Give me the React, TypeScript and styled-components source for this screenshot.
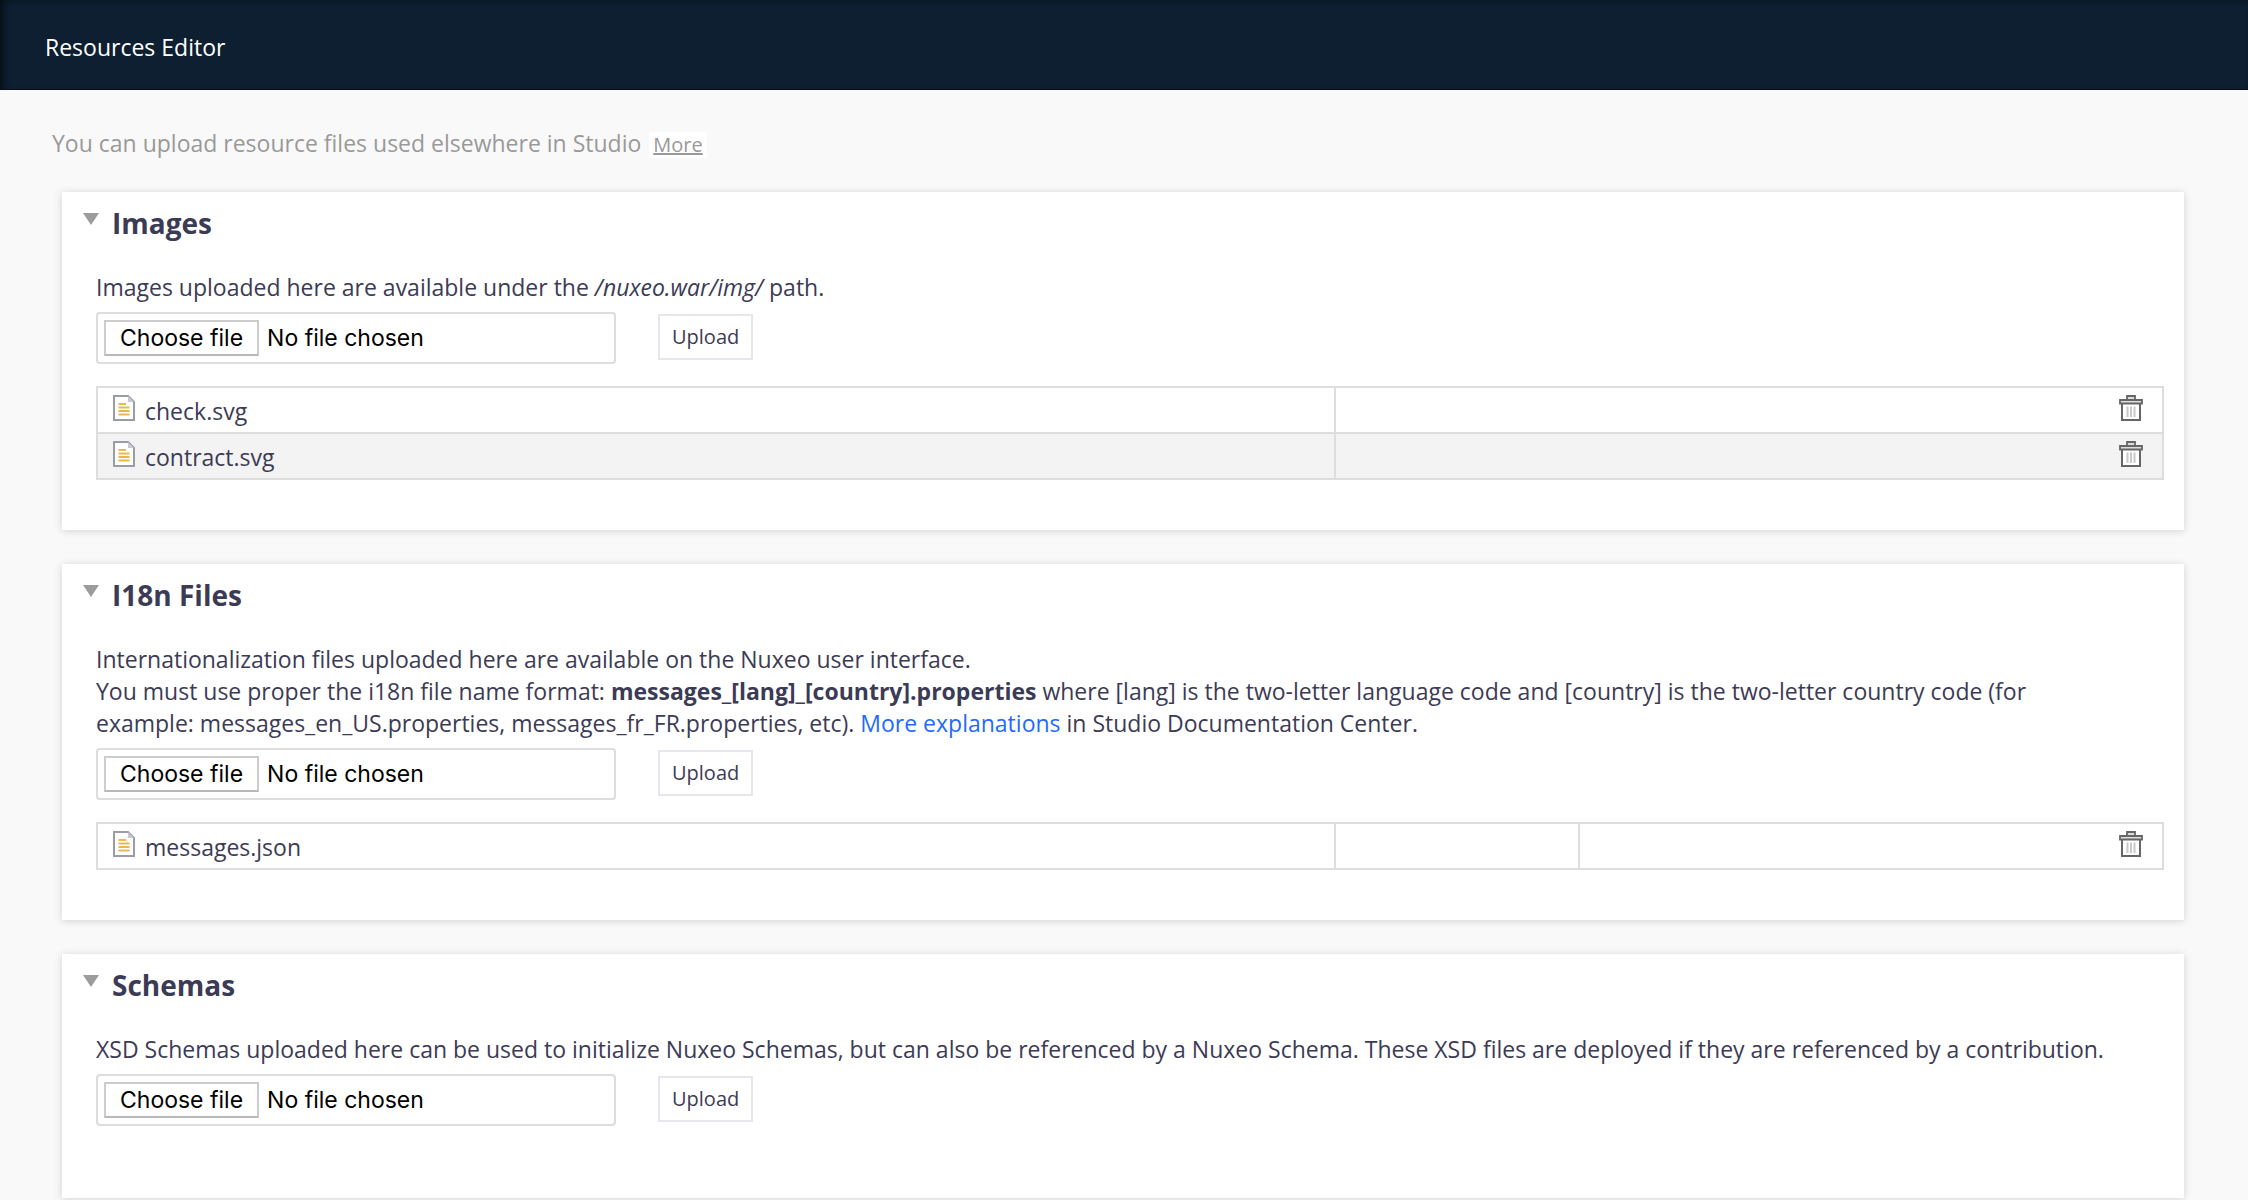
import React, { useId, useState } from "react";
import styled, { createGlobalStyle } from "styled-components";

const GlobalStyle = createGlobalStyle`
  *, *::before, *::after { box-sizing: border-box; }
  body {
    margin: 0;
    background: #f9f9f9;
    color: #3c3b56;
    font: 23px/32px "Open Sans", "Noto Sans", sans-serif;
  }
`;

const Header = styled.header`
  display: flex;
  align-items: center;
  height: 90px;
  padding: 4px 45px 0;
  background: #0d1f30;
  border-bottom: 1px solid #0b0b20;
  box-shadow: inset 8px 0 8px -6px rgba(0, 0, 0, 0.7), inset 0 4px 6px -4px rgba(0, 0, 0, 0.3);
`;

const Title = styled.h1`
  margin: 0;
  color: #fff;
  font-size: 23px;
  font-weight: 400;
  line-height: 32px;
`;

const Main = styled.main`
  padding: 37px 64px 2px 62px;
`;

const Intro = styled.p`
  display: flex;
  align-items: baseline;
  gap: 8px;
  margin: 0 0 33px -10px;
  color: #999;
`;

const MoreLink = styled.a`
  padding: 0 4px;
  background: #fff;
  color: #999;
  font-size: 20px;
  line-height: 26px;
  text-decoration: underline;
`;

const Card = styled.section`
  margin-bottom: 34px;
  padding: 12px 20px 50px 34px;
  background: #fff;
  box-shadow: 0 1px 8px rgba(0, 0, 0, 0.16);

  &:last-child {
    margin-bottom: 0;
  }
`;

const CardHeader = styled.h2`
  margin: 0 0 29px -13px;
  font-size: 28px;
  line-height: 38px;
`;

const Toggle = styled.button`
  display: flex;
  align-items: flex-start;
  gap: 13px;
  padding: 0;
  border: 0;
  background: none;
  color: inherit;
  font: inherit;
  cursor: pointer;
`;

const Arrow = styled.svg<{ $open: boolean }>`
  width: 16px;
  height: 12px;
  margin-top: 9px;
  transform: ${(p) => (p.$open ? "none" : "rotate(-90deg)")};
`;

const Description = styled.p`
  margin: 0 0 9px;
  padding-right: 44px;
`;

const Link = styled.a`
  color: #1f6bff;
  text-decoration: none;
`;

const Form = styled.form`
  display: flex;
  align-items: flex-start;
  gap: 42px;
  margin-bottom: 22px;
`;

const FileField = styled.label`
  position: relative;
  display: flex;
  align-items: center;
  gap: 8px;
  width: 520px;
  height: 52px;
  padding: 0 6px;
  border: 2px solid #ddd;
  border-radius: 4px;
  color: #000;
  font: 23px/32px Inter, "Liberation Sans", sans-serif;
`;

const FileInput = styled.input`
  position: absolute;
  inset: 0;
  width: 100%;
  opacity: 0;
  cursor: pointer;
`;

const Choose = styled.span`
  padding: 0 14px;
  border: 2px solid #ccc;
  border-bottom-color: #b8b8b8;
`;

const UploadButton = styled.button`
  height: 46px;
  margin-top: 2px;
  padding: 0 12px;
  border: 2px solid #e6e6ee;
  background: #fff;
  color: inherit;
  font: 20px/28px "Open Sans", sans-serif;
  cursor: pointer;
`;

const FileTable = styled.table`
  width: 100%;
  border-collapse: collapse;
  table-layout: fixed;
`;

const Row = styled.tr`
  &:nth-child(even) {
    background: #f3f3f3;
  }
`;

const Cell = styled.td<{ $width?: string }>`
  width: ${(p) => p.$width ?? "auto"};
  height: 46px;
  padding: 0 15px 4px;
  border: 2px solid #ddd;
`;

const FileName = styled.div`
  display: flex;
  align-items: center;
  gap: 10px;
  height: 40px;

  span {
    padding-top: 6px;
  }
`;

const Actions = styled.div`
  display: flex;
  justify-content: flex-end;
  padding-right: 4px;
`;

const DeleteButton = styled.button`
  display: flex;
  padding: 0;
  border: 0;
  background: none;
  cursor: pointer;
`;

function DocIcon() {
  return (
    <svg width="22" height="26" viewBox="0 0 22 26" fill="none" aria-hidden="true">
      <path d="M1 1H15L21 7V25H1Z" fill="#fff" stroke="#9a9ca6" strokeWidth="2" />
      <path d="M15 1V7H21Z" fill="#c9cad0" />
      <path d="M5.500 9H13M5.500 12.500H16.500M5.500 16H16.500M5.500 19.500H16.500" stroke="#ebb850" strokeWidth="2.200" />
    </svg>
  );
}

function TrashIcon() {
  return (
    <svg width="24" height="26" viewBox="0 0 24 26" fill="none" aria-hidden="true">
      <path d="M8 5V1H16V5" fill="#ddd" stroke="#666" strokeWidth="1.800" />
      <path d="M3 8H21V25H3Z" fill="#fff" stroke="#666" strokeWidth="2" />
      <path d="M1 5H23V8.500H1Z" fill="#ddd" stroke="#666" strokeWidth="1.800" />
      <path d="M8.500 11.500V22M12 11.500V22M15.500 11.500V22" stroke="#c8c8c8" strokeWidth="2" />
    </svg>
  );
}

function FilePicker() {
  const id = useId();
  const [name, setName] = useState("");
  return (
    <Form onSubmit={(e) => e.preventDefault()}>
      <FileField htmlFor={id}>
        <Choose>Choose file</Choose>
        <span>{name || "No file chosen"}</span>
        <FileInput id={id} type="file" onChange={(e) => setName(e.target.files?.[0]?.name ?? "")} />
      </FileField>
      <UploadButton type="submit">Upload</UploadButton>
    </Form>
  );
}

function Files({ names, locale }: { names: string[]; locale?: boolean }) {
  return (
    <FileTable>
      <tbody>
        {names.map((name) => (
          <Row key={name}>
            <Cell $width="59.9%">
              <FileName>
                <DocIcon />
                <span>{name}</span>
              </FileName>
            </Cell>
            {locale && <Cell $width="244px" />}
            <Cell>
              <Actions>
                <DeleteButton type="button" aria-label={`Delete ${name}`}>
                  <TrashIcon />
                </DeleteButton>
              </Actions>
            </Cell>
          </Row>
        ))}
      </tbody>
    </FileTable>
  );
}

function Panel({ title, description, children }: { title: string; description: React.ReactNode; children?: React.ReactNode }) {
  const [open, setOpen] = useState(true);
  return (
    <Card>
      <CardHeader>
        <Toggle type="button" aria-expanded={open} onClick={() => setOpen(!open)}>
          <Arrow $open={open} viewBox="0 0 16 12" aria-hidden="true">
            <path d="M0 0H16L8 12Z" fill="#9c9c9c" />
          </Arrow>
          {title}
        </Toggle>
      </CardHeader>
      {open && (
        <>
          <Description>{description}</Description>
          <FilePicker />
          {children}
        </>
      )}
    </Card>
  );
}

export default function App() {
  return (
    <>
      <GlobalStyle />
      <Header>
        <Title>Resources Editor</Title>
      </Header>
      <Main>
        <Intro>
          You can upload resource files used elsewhere in Studio
          <MoreLink href="#more">More</MoreLink>
        </Intro>
        <Panel
          title="Images"
          description={<>Images uploaded here are available under the <em>/nuxeo.war/img/</em> path.</>}
        >
          <Files names={["check.svg", "contract.svg"]} />
        </Panel>
        <Panel
          title="I18n Files"
          description={
            <>
              Internationalization files uploaded here are available on the Nuxeo user interface.
              <br />
              You must use proper the i18n file name format: <strong>messages_[lang]_[country].properties</strong> where
              [lang] is the two-letter language code and [country] is the two-letter country code (for example:
              messages_en_US.properties, messages_fr_FR.properties, etc). <Link href="#docs">More explanations</Link> in
              Studio Documentation Center.
            </>
          }
        >
          <Files names={["messages.json"]} locale />
        </Panel>
        <Panel
          title="Schemas"
          description="XSD Schemas uploaded here can be used to initialize Nuxeo Schemas, but can also be referenced by a Nuxeo Schema. These XSD files are deployed if they are referenced by a contribution."
        />
      </Main>
    </>
  );
}
